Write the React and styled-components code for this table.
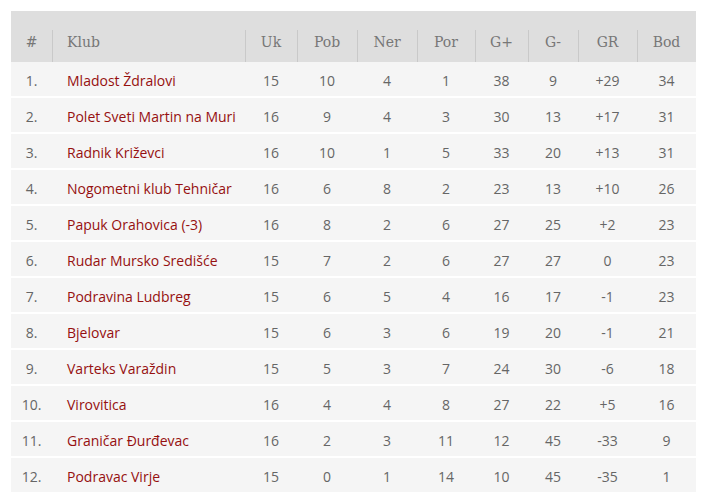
import React from 'react'
import styled, { createGlobalStyle } from 'styled-components'

const GlobalStyle = createGlobalStyle`
  body {
    margin: 0;
    background: #ffffff;
    font-family: 'Open Sans', sans-serif;
  }
`

const teams = [
  ['1.', 'Mladost Ždralovi', 15, 10, 4, 1, 38, 9, '+29', 34],
  ['2.', 'Polet Sveti Martin na Muri', 16, 9, 4, 3, 30, 13, '+17', 31],
  ['3.', 'Radnik Križevci', 16, 10, 1, 5, 33, 20, '+13', 31],
  ['4.', 'Nogometni klub Tehničar', 16, 6, 8, 2, 23, 13, '+10', 26],
  ['5.', 'Papuk Orahovica (-3)', 16, 8, 2, 6, 27, 25, '+2', 23],
  ['6.', 'Rudar Mursko Središće', 15, 7, 2, 6, 27, 27, '0', 23],
  ['7.', 'Podravina Ludbreg', 15, 6, 5, 4, 16, 17, '-1', 23],
  ['8.', 'Bjelovar', 15, 6, 3, 6, 19, 20, '-1', 21],
  ['9.', 'Varteks Varaždin', 15, 5, 3, 7, 24, 30, '-6', 18],
  ['10.', 'Virovitica', 16, 4, 4, 8, 27, 22, '+5', 16],
  ['11.', 'Graničar Đurđevac', 16, 2, 3, 11, 12, 45, '-33', 9],
  ['12.', 'Podravac Virje', 15, 0, 1, 14, 10, 45, '-35', 1],
]

const columns = [
  { label: '#', width: 41 },
  { label: 'Klub', width: 193, left: true },
  { label: 'Uk', width: 52 },
  { label: 'Pob', width: 60 },
  { label: 'Ner', width: 60 },
  { label: 'Por', width: 58 },
  { label: 'G+', width: 53 },
  { label: 'G-', width: 50 },
  { label: 'GR', width: 59 },
  { label: 'Bod', width: 59 },
]

export default function App() {
  return (
    <>
      <GlobalStyle />
      <Wrapper>
        <Table>
          <colgroup>
            {columns.map((c) => (
              <col key={c.label} style={{ width: c.width }} />
            ))}
          </colgroup>
          <thead>
            <tr>
              {columns.map((c, i) => (
                <HeadCell key={c.label} $left={c.left} $first={i === 0}>
                  {c.label}
                </HeadCell>
              ))}
            </tr>
          </thead>
          <tbody>
            {teams.map((t) => (
              <Row key={t[0]}>
                {t.map((v, i) =>
                  i === 1 ? (
                    <NameCell key={i}>{v}</NameCell>
                  ) : (
                    <Cell key={i}>{v}</Cell>
                  )
                )}
              </Row>
            ))}
          </tbody>
        </Table>
      </Wrapper>
    </>
  )
}

const Wrapper = styled.div`
  padding: 11px 0 0 11px;
`

const Table = styled.table`
  width: 685px;
  border-collapse: collapse;
  table-layout: fixed;
`

const HeadCell = styled.th`
  position: relative;
  height: 51px;
  box-sizing: border-box;
  padding: 10px 0 0 ${(p) => (p.$left ? '15px' : '0')};
  background: #dedede;
  color: #777777;
  font-family: 'DejaVu Serif', serif;
  font-weight: normal;
  font-size: 14px;
  text-align: ${(p) => (p.$left ? 'left' : 'center')};
  vertical-align: middle;

  &::before {
    content: '';
    display: ${(p) => (p.$first ? 'none' : 'block')};
    position: absolute;
    left: 0;
    top: 19px;
    bottom: 0;
    width: 1px;
    background: #c9c9c9;
  }
`

const Row = styled.tr`
  background: #f5f5f5;
  border-bottom: 2px solid #ffffff;
`

const Cell = styled.td`
  height: 32px;
  padding: 2px 0 0;
  color: #666666;
  font-size: 14px;
  text-align: center;
  vertical-align: middle;
`

const NameCell = styled(Cell)`
  padding-left: 15px;
  text-align: left;
  color: #961010;
  white-space: nowrap;
`
